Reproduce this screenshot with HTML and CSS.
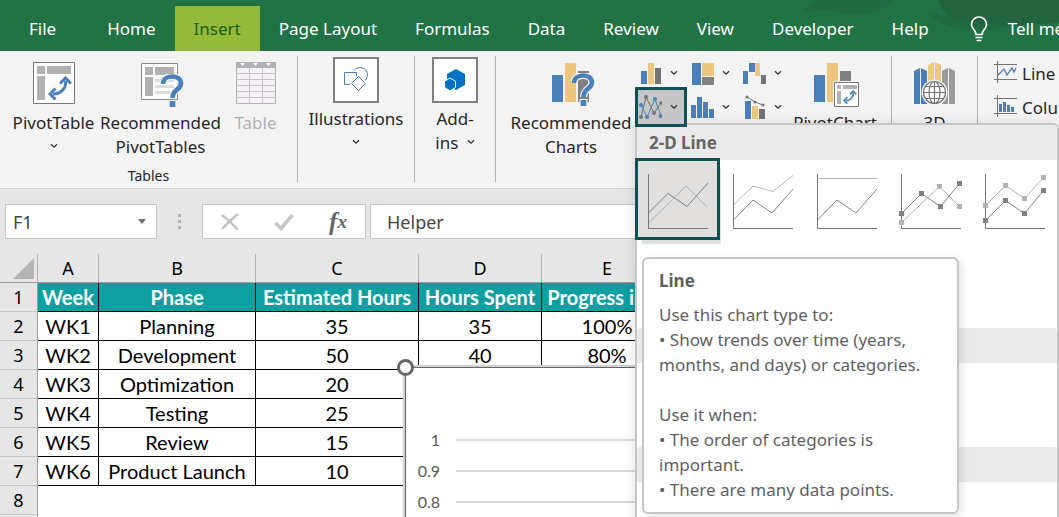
FILE: index.html
```html
<!DOCTYPE html>
<html lang="en">
<head>
  <meta charset="UTF-8">
  <meta name="viewport" content="width=device-width, initial-scale=1.0">
  <title>Worksheet - Insert Chart</title>
  <link rel="stylesheet" href="styles.css">
</head>
<body>

  <!-- Shared symbols -->
  <svg class="symbols" aria-hidden="true">
    <symbol id="chevron" viewBox="0 0 8 6">
      <path d="M1 1.2 4 4.2 7 1.2" fill="none" stroke="#333" stroke-width="1.3"/>
    </symbol>
    <symbol id="swap" viewBox="0 0 24 24">
      <path d="M17.5 5C18.5 12 13 18 5 18" fill="none" stroke="#4a80ba" stroke-width="3"/>
      <path d="M12 7.5 17.5 2 23 7.5M7.5 12.500 2 18 7.5 23.500" fill="none" stroke="#4a80ba" stroke-width="3"/>
    </symbol>
    <symbol id="question" viewBox="0 0 24 34">
      <path d="M3 10C3 0 21 0 21 9.500 21 16 12.500 15 12.500 24" fill="none" stroke="#f3f3f3" stroke-width="7"/>
      <path d="M3 10C3 0 21 0 21 9.500 21 16 12.500 15 12.500 24" fill="none" stroke="#4a80ba" stroke-width="4.600"/>
      <path d="M8.500 26h8v8h-8z" fill="#f3f3f3"/>
      <path d="M9.700 27h5.600v6H9.700z" fill="#4a80ba"/>
    </symbol>
  </svg>

  <header class="tabs">
    <svg class="tabs-art" viewBox="0 0 320 51" aria-hidden="true">
      <path d="M64 14Q68 0 85 0H155Q145 14 110 15 85 6 64 14z" fill="#216b42"/>
      <path d="M190 13Q205 30 240 29 275 28 290 22L215 18z" fill="#206a41"/>
      <path d="M199 0Q203 14 215 19 260 30 320 22V0z" fill="#236440"/>
    </svg>
    <nav class="tab-list">
      <button class="tab tab-file">File</button>
      <button class="tab">Home</button>
      <button class="tab active">Insert</button>
      <button class="tab">Page Layout</button>
      <button class="tab">Formulas</button>
      <button class="tab">Data</button>
      <button class="tab">Review</button>
      <button class="tab">View</button>
      <button class="tab">Developer</button>
      <button class="tab">Help</button>
      <button class="tab tell-me">
        <svg width="18" height="26" viewBox="0 0 18 26" fill="none" stroke="#fff" stroke-width="1.700" aria-hidden="true">
          <path d="M6 18.500C6 14 1.500 13 1.500 8.500A7.500 7.500 0 0 1 16.500 8.500C16.500 13 12 14 12 18.500zM5.500 21.500h7M6.500 24.500h5"/>
        </svg>
        Tell me
      </button>
    </nav>
  </header>

  <section class="ribbon">
    <div class="group group-tables">
      <div class="group-row">
        <button class="big">
          <svg width="42" height="42" viewBox="0 0 42 42">
            <path d="M.5.5h41v41H.5z" fill="#fff" stroke="#777"/>
            <path d="M4 4h8v8H4zM14 4h24v8H14zM4 14h8v24H4z" fill="#b1b1b1"/>
            <use href="#swap" x="15" y="14" width="24" height="24"/>
          </svg>
          <span>PivotTable</span>
          <svg class="chevron"><use href="#chevron"/></svg>
        </button>
        <button class="big">
          <svg width="42" height="42" viewBox="0 0 42 42">
            <path d="M1.500 1.500h36v36h-36z" fill="#fff" stroke="#888"/>
            <path d="M5 5h8v8H5zM15 5h19v8H15zM5 15h8v19H5z" fill="#b1b1b1"/>
            <path d="M15 17h19v3H15zM15 23h19v3H15zM15 29h19v3H15z" fill="#dcdcdc"/>
            <use href="#question" x="20" y="12" width="24" height="34"/>
          </svg>
          <span>Recommended<br>PivotTables</span>
        </button>
        <button class="big" disabled>
          <svg width="40" height="42" viewBox="0 0 40 42">
            <path d="M.5.5h39v41H.5z" fill="#f6f0f8" stroke="#b1b1b1"/>
            <path d="M0 0h40v6H0z" fill="#b1b1b1"/>
            <path d="M4 1h5L6.500 4zM17 1h5l-2.500 3zM30 1h5l-2.500 3z" fill="#fff"/>
            <path d="M13.500 6v36M26.500 6v36M0 11.500h40M0 17.500h40M0 23.500h40M0 29.500h40M0 35.500h40" stroke="#c4c4c4"/>
          </svg>
          <span>Table</span>
        </button>
      </div>
      <div class="group-name">Tables</div>
    </div>

    <div class="group group-illustrations">
      <button class="big framed">
        <svg width="46" height="46" viewBox="0 0 46 46">
          <path d="M1 1h44v44H1z" fill="#fff" stroke="#808080" stroke-width="2"/>
          <g fill="#fff" stroke="#4a80ba">
            <circle cx="27" cy="18" r="7.500"/>
            <path d="M9.500 13.500h16v16h-16z" stroke="none"/>
            <path d="M11.500 15.500h12v12h-12z"/>
            <path d="M25.500 17 35 26.500 25.500 36 16 26.500z" stroke="none"/>
            <path d="M25.500 19.500 32.500 26.500 25.500 33.500 18.500 26.500z"/>
          </g>
        </svg>
        <span>Illustrations</span>
        <svg class="chevron"><use href="#chevron"/></svg>
      </button>
    </div>

    <div class="group group-addins">
      <button class="big framed">
        <svg width="46" height="46" viewBox="0 0 46 46">
          <path d="M1 1h44v44H1z" fill="#fff" stroke="#808080" stroke-width="2"/>
          <path d="M24 12 33 17V28L24 33 15 28V17z" fill="#0071c5"/>
          <path d="M18 21 23.500 24.200V30.600L18 33.800 12.500 30.600V24.200z" fill="#0071c5" stroke="#fff"/>
        </svg>
        <span>Add-<br>ins <svg class="chevron inline"><use href="#chevron"/></svg></span>
      </button>
    </div>

    <div class="group group-charts">
      <button class="big">
        <svg width="38" height="42" viewBox="0 0 38 42">
          <path d="M0 13h11v27H0z" fill="#4a80ba"/>
          <path d="M13 1h11v39H13z" fill="#eec77f"/>
          <path d="M26 9h11v31H26z" fill="#808080"/>
          <use href="#question" x="19" y="11" width="24" height="34"/>
        </svg>
        <span>Recommended<br>Charts</span>
      </button>
      <div class="chart-types">
        <button class="small" aria-label="Column or bar chart">
          <svg width="24" height="24" viewBox="0 0 24 24">
            <path d="M3 10h6v13H3z" fill="#4a80ba"/><path d="M10 2h6v21h-6z" fill="#eec77f"/><path d="M17 7h6v16h-6z" fill="#737373"/>
          </svg>
          <svg class="chevron"><use href="#chevron"/></svg>
        </button>
        <button class="small" aria-label="Hierarchy chart">
          <svg width="24" height="24" viewBox="0 0 24 24">
            <path d="M2 2h9v22H2z" fill="#4a80ba"/><path d="M12 2h12v13H12z" fill="#eec77f"/><path d="M12 16h12v8H12z" fill="#808080"/>
          </svg>
          <svg class="chevron"><use href="#chevron"/></svg>
        </button>
        <button class="small" aria-label="Waterfall chart">
          <svg width="24" height="24" viewBox="0 0 24 24">
            <path d="M1 10h5v13H1zM7 2h6v9H7z" fill="#4a80ba"/><path d="M13 2h5v13h-5z" fill="#eec77f"/><path d="M19 14h5v9h-5z" fill="#737373"/>
          </svg>
          <svg class="chevron"><use href="#chevron"/></svg>
        </button>
        <button class="small selected" aria-label="Line chart">
          <svg width="24" height="24" viewBox="0 0 24 24">
            <path d="M3 22 8 2 16 18 23 8" fill="none" stroke="#737373"/>
            <g fill="#737373"><circle cx="3" cy="22" r="2"/><circle cx="8" cy="2" r="2"/><circle cx="16" cy="18" r="2"/><circle cx="23" cy="8" r="1.800"/></g>
            <path d="M3 10 9 22 17 4 23 21" fill="none" stroke="#4a80ba"/>
            <g fill="#4a80ba"><circle cx="3" cy="10" r="2"/><circle cx="9" cy="22" r="2"/><circle cx="17" cy="4" r="2"/><circle cx="22.500" cy="21" r="2"/></g>
          </svg>
          <svg class="chevron"><use href="#chevron"/></svg>
        </button>
        <button class="small" aria-label="Statistic chart">
          <svg width="24" height="24" viewBox="0 0 24 24">
            <path d="M1 10h5v13H1zM7 2h5v21H7zM13 7h5v16h-5zM19 14h5v9h-5z" fill="#4a80ba"/>
          </svg>
          <svg class="chevron"><use href="#chevron"/></svg>
        </button>
        <button class="small" aria-label="Combo chart">
          <svg width="24" height="24" viewBox="0 0 24 24">
            <path d="M3 6h6v18H3z" fill="#4a80ba"/><path d="M10 11h6v13h-6z" fill="#eec77f"/><path d="M17 14h6v10h-6z" fill="#737373"/>
            <path d="M5 2 13 7 21 10" fill="none" stroke="#737373"/>
            <g fill="#737373"><circle cx="5" cy="2" r="1.500"/><circle cx="13" cy="7" r="1.500"/><circle cx="21" cy="10" r="1.500"/></g>
          </svg>
          <svg class="chevron"><use href="#chevron"/></svg>
        </button>
      </div>
      <button class="big pivot-chart">
        <svg width="42" height="42" viewBox="0 0 42 42">
          <path d="M0 13h11v27H0z" fill="#4a80ba"/>
          <path d="M13 1h11v39H13z" fill="#eec77f"/>
          <path d="M26 9h11v12H26z" fill="#808080"/>
          <path d="M19 19h27v27H19z" fill="#f3f3f3"/>
          <path d="M20.500 20.500h24v24h-24z" fill="#fff" stroke="#777"/>
          <path d="M23 23h4v4h-4zM29 23h14v4H29zM23 29h4v13h-4z" fill="#b1b1b1"/>
          <use href="#swap" x="29" y="28" width="14" height="14"/>
        </svg>
        <span>PivotChart</span>
      </button>
    </div>

    <div class="group group-tours">
      <button class="big">
        <svg width="42" height="42" viewBox="0 0 42 42">
          <path d="M0 9 6 6V42H0zM7 6l6 3V42H7z" fill="#4a80ba"/>
          <path d="M14 3 20 0V30H14zM21 0l6 3V30H21z" fill="#eec77f"/>
          <path d="M28 9 34 6V42H28zM35 6l6 3V42H35z" fill="#9a9a9a"/>
          <circle cx="20.500" cy="30.500" r="13" fill="#f3f3f3"/>
          <g fill="#fff" stroke="#737373" stroke-width="1.200">
            <circle cx="20.500" cy="30.500" r="11"/>
            <ellipse cx="20.500" cy="30.500" rx="5.500" ry="11"/>
            <path d="M20.500 19.500v22M9.500 30.500h22M12 24.500h17M12 36.500h17" fill="none"/>
          </g>
        </svg>
        <span>3D<br>Map</span>
      </button>
    </div>

    <div class="group group-sparklines">
      <button class="spark">
        <svg width="24" height="24" viewBox="0 0 24 24" fill="none" stroke="#737373">
          <path d="M0 3.500h23M0 18.500h23M3.500 0v22"/>
          <path d="M4 14 10 8 13 14 18 7 20 11 22 7" stroke="#4a80ba" stroke-width="1.300"/>
        </svg>
        Line
      </button>
      <button class="spark">
        <svg width="24" height="24" viewBox="0 0 24 24" fill="none" stroke="#737373">
          <path d="M0 3.500h23M0 18.500h23M3.500 0v22"/>
          <path d="M5 9h3v8H5zM9 7h3v10H9zM13 10h3v7h-3zM17 12h3v5h-3z" fill="#4a80ba" stroke="none"/>
        </svg>
        Column
      </button>
    </div>
  </section>

  <section class="formula-bar">
    <div class="name-box">
      <input type="text" value="F1" aria-label="Name box">
      <svg width="8" height="5" viewBox="0 0 8 5"><path d="M0 0h8L4 5z" fill="#737373"/></svg>
    </div>
    <div class="grip"><i></i><i></i><i></i></div>
    <div class="formula-tools">
      <button aria-label="Cancel">
        <svg width="18" height="18" viewBox="0 0 18 18"><path d="M1 2Q9 8 17 17M17 1Q8 8 1 16" fill="none" stroke="#c0c0c0" stroke-width="2.300"/></svg>
      </button>
      <button aria-label="Enter">
        <svg width="20" height="18" viewBox="0 0 20 18"><path d="M1.500 10 7 15.500 18.500 2" fill="none" stroke="#c6c6c6" stroke-width="3.500"/></svg>
      </button>
      <button class="fx" aria-label="Insert function">f<small>x</small></button>
    </div>
    <input class="formula-input" type="text" value="Helper" aria-label="Formula">
  </section>

  <main class="sheet">
    <table class="cells">
      <colgroup>
        <col class="col-row"><col class="col-a"><col class="col-b"><col class="col-c"><col class="col-d"><col class="col-e"><col class="col-f">
      </colgroup>
      <thead>
        <tr>
          <th><svg class="corner" width="21" height="21" viewBox="0 0 21 21"><path d="M21 0V21H0z" fill="#b4b4b4"/></svg></th>
          <th>A</th><th>B</th><th>C</th><th>D</th><th>E</th><th>F</th>
        </tr>
      </thead>
      <tbody>
        <tr class="titles"><th>1</th><td>Week</td><td>Phase</td><td>Estimated Hours</td><td>Hours Spent</td><td>Progress in %</td><td>Helper</td></tr>
        <tr><th>2</th><td>WK1</td><td>Planning</td><td>35</td><td>35</td><td>100%</td><td></td></tr>
        <tr><th>3</th><td>WK2</td><td>Development</td><td>50</td><td>40</td><td>80%</td><td></td></tr>
        <tr><th>4</th><td>WK3</td><td>Optimization</td><td>20</td><td></td><td></td><td></td></tr>
        <tr><th>5</th><td>WK4</td><td>Testing</td><td>25</td><td></td><td></td><td></td></tr>
        <tr><th>6</th><td>WK5</td><td>Review</td><td>15</td><td></td><td></td><td></td></tr>
        <tr><th>7</th><td>WK6</td><td>Product Launch</td><td>10</td><td></td><td></td><td></td></tr>
        <tr class="blank"><th>8</th><td></td><td></td><td></td><td></td><td></td><td></td></tr>
        <tr class="blank"><th></th><td></td><td></td><td></td><td></td><td></td><td></td></tr>
      </tbody>
    </table>

    <!-- Chart object floating over the cells -->
    <div class="chart">
      <span class="handle"></span>
      <div class="plot">
        <div class="tick"><span>1</span></div>
        <div class="tick"><span>0.9</span></div>
        <div class="tick"><span>0.8</span></div>
      </div>
    </div>
  </main>

  <!-- Line chart drop-down -->
  <div class="menu">
    <h2 class="menu-title">2-D Line</h2>
    <div class="gallery">
      <button class="option chosen" aria-label="Line">
        <svg width="60" height="56" viewBox="0 0 60 56" fill="none">
          <path d="M.5 49 38 12 59 33" stroke="#b1b1b1"/>
          <path d="M.5 39 20 19.500 39 32.500 60 9" stroke="#808080"/>
          <path d="M.5 0v54.500H60" stroke="#777"/>
        </svg>
      </button>
      <button class="option" aria-label="Stacked line">
        <svg width="60" height="56" viewBox="0 0 60 56" fill="none">
          <path d="M.5 31 20 12 40 17.500 60 1.500" stroke="#b8b8b8"/>
          <path d="M.5 46 20 26 39 39 60 15" stroke="#808080"/>
          <path d="M.5 0v54.500H60" stroke="#777"/>
        </svg>
      </button>
      <button class="option" aria-label="100% stacked line">
        <svg width="60" height="56" viewBox="0 0 60 56" fill="none">
          <path d="M.5 4.500H60" stroke="#b1b1b1"/>
          <path d="M.5 46 20 26 39 39 60 15" stroke="#808080"/>
          <path d="M.5 0v54.500H60" stroke="#777"/>
        </svg>
      </button>
      <button class="option" aria-label="Line with markers">
        <svg width="60" height="56" viewBox="0 0 60 56" fill="none">
          <path d="M.5 0v54.500H60" stroke="#777"/>
          <path d="M.5 48.500 38.500 12.500 58.500 32.500" stroke="#b1b1b1"/>
          <path d="M-2 46h5v5h-5zM36 10h5v5h-5zM56 30h5v5h-5z" fill="#b1b1b1"/>
          <path d="M.5 39.500 20.500 19.500 39.500 32.500 58.500 9.500" stroke="#808080"/>
          <path d="M-2 37h5v5h-5zM18 17h5v5h-5zM37 30h5v5h-5zM56 7h5v5h-5z" fill="#808080"/>
        </svg>
      </button>
      <button class="option" aria-label="Stacked line with markers">
        <svg width="60" height="56" viewBox="0 0 60 56" fill="none">
          <path d="M.5 0v54.500H60" stroke="#777"/>
          <path d="M.5 31.500 20.500 11.500 39.500 24.500 58.500 3.500" stroke="#b1b1b1"/>
          <path d="M-2 29h5v5h-5zM18 9h5v5h-5zM37 22h5v5h-5zM56 1h5v5h-5z" fill="#b1b1b1"/>
          <path d="M.5 46.500 20.500 26.500 39.500 39.500 58.500 16.500" stroke="#808080"/>
          <path d="M-2 44h5v5h-5zM18 24h5v5h-5zM37 37h5v5h-5zM56 14h5v5h-5z" fill="#808080"/>
        </svg>
      </button>
    </div>
    <div class="menu-title"></div>
    <div class="gallery short"></div>
    <div class="menu-title"></div>

    <div class="tooltip" role="tooltip">
      <h3>Line</h3>
      <p>Use this chart type to:<br>• Show trends over time (years,<br>months, and days) or categories.</p>
      <p>Use it when:<br>• The order of categories is<br>important.<br>• There are many data points.</p>
    </div>
  </div>

</body>
</html>
```
FILE: styles.css
```css
* {
  box-sizing: border-box;
}
body {
  margin: 0;
  height: 100vh;
  display: flex;
  flex-direction: column;
  position: relative;
  overflow: hidden;
  font-family: "Noto Sans", "Open Sans", sans-serif;
  font-size: 17px;
  color: #262626;
  background: #e6e6e6;
}
button,
input {
  font: inherit;
  color: inherit;
  border: 0;
  padding: 0;
  margin: 0;
  background: none;
}
.symbols {
  position: absolute;
  width: 0;
  height: 0;
}
.chevron {
  width: 8px;
  height: 6px;
  flex: none;
}

/* Tabs */
.tabs {
  flex: none;
  position: relative;
  background: #217346;
  overflow: hidden;
}
.tabs-art {
  position: absolute;
  top: 0;
  right: 0;
  width: 320px;
  height: 51px;
}
.tab-list {
  position: relative;
  display: flex;
  padding: 6px 0 0 10px;
}
.tab {
  flex: none;
  height: 45px;
  padding: 0 19px;
  color: #fff;
  white-space: nowrap;
}
.tab-file {
  margin-right: 13px;
}
.tab.active {
  background: #95b93a;
  color: #155f14;
}
.tell-me {
  display: flex;
  align-items: center;
  gap: 20px;
  padding-left: 22px;
}

/* Ribbon */
.ribbon {
  flex: none;
  display: flex;
  height: 138px;
  padding-top: 5px;
  background: #f3f3f3;
  border-bottom: 1px solid #d2d2d2;
  overflow: hidden;
}
.group {
  flex: none;
  height: 126px;
  border-right: 1px solid #b1b1b1;
}
.group-row {
  display: flex;
}
.group-tables {
  width: 298px;
}
.group-illustrations {
  width: 117px;
}
.group-addins {
  width: 81px;
}
.group-charts {
  display: flex;
  width: 396px;
  padding-left: 11px;
}
.group-tours {
  width: 86px;
}
.group-sparklines {
  padding-left: 16px;
  border: 0;
}
.group-name {
  margin-top: 5px;
  text-align: center;
  font-size: 14px;
  line-height: 20px;
}
.big {
  display: flex;
  flex-direction: column;
  align-items: center;
  width: 100%;
  height: 105px;
  padding-top: 6px;
  line-height: 24px;
  white-space: nowrap;
}
.big > svg:first-child {
  flex: none;
  margin-bottom: 7px;
  overflow: visible;
}
.big .chevron {
  margin-top: 8px;
}
.big .chevron.inline {
  margin: 0 0 4px 4px;
}
.big:disabled {
  color: #b1b1b1;
}
.big.framed {
  padding-top: 1px;
}
.framed > svg:first-child {
  margin-bottom: 4px;
}
.group-tables .big {
  width: 107px;
}
.group-tables .big:disabled {
  width: 83px;
}
.group-charts .big {
  width: 128px;
}
.group-charts .pivot-chart {
  width: 88px;
  margin-left: 3px;
}
.chart-types {
  display: grid;
  grid-template-columns: repeat(3, 46px);
  grid-auto-rows: 34px;
  gap: 0 6px;
  margin-left: 3px;
}
.small {
  display: flex;
  align-items: center;
  gap: 8px;
}
.small.selected {
  position: relative;
  z-index: 3;
  background: #c6c6c6;
  outline: 3px solid #0f4f55;
}
.spark {
  display: flex;
  align-items: center;
  gap: 4px;
  height: 34px;
}

/* Formula bar */
.formula-bar {
  flex: none;
  display: flex;
  height: 65px;
  padding: 15px 0 15px 5px;
  font-size: 18px;
  color: #444;
}
.name-box {
  display: flex;
  align-items: center;
  width: 152px;
  padding: 0 10px 0 7px;
  background: #fff;
  border: 1px solid #c6c6c6;
}
.name-box input {
  flex: 1;
  min-width: 0;
}
.grip {
  display: flex;
  flex-direction: column;
  align-items: center;
  justify-content: center;
  gap: 3px;
  width: 45px;
}
.grip i {
  width: 3px;
  height: 3px;
  background: #b1b1b1;
}
.formula-tools {
  display: flex;
  width: 164px;
  background: #fff;
  border: 1px solid #c6c6c6;
}
.formula-tools button {
  flex: 1;
  display: flex;
  align-items: center;
  justify-content: center;
}
.formula-tools .fx {
  font: italic bold 25px "Liberation Serif", serif;
  color: #666;
}
.fx small {
  font-size: 19px;
}
.formula-input {
  flex: 1;
  margin-left: 4px;
  padding-left: 16px;
  background: #fff;
  border: 1px solid #c6c6c6;
}

/* Sheet */
.sheet {
  flex: 1;
  position: relative;
  overflow: hidden;
  background: #fff;
}
.cells {
  width: 100%;
  table-layout: fixed;
  border-collapse: separate;
  border-spacing: 0;
  font-family: Lato, "Noto Sans", sans-serif;
  font-size: 20px;
  color: #000;
}
.col-row { width: 38px; }
.col-a { width: 61px; }
.col-b { width: 157px; }
.col-c { width: 163px; }
.col-d { width: 123px; }
.col-e { width: 131px; }
.cells th,
.cells td {
  height: 29px;
  padding: 0;
  line-height: 28px;
  text-align: center;
  white-space: nowrap;
}
.cells th {
  font-family: "Noto Sans", sans-serif;
  font-size: 18px;
  font-weight: normal;
  background: #e6e6e6;
  border-right: 1px solid #b1b1b1;
  border-bottom: 1px solid #c6c6c6;
}
.cells thead th {
  border-bottom-color: #9b9b9b;
}
.cells tbody th {
  border-right-color: #9b9b9b;
}
.cells td {
  border-right: 1px solid #000;
  border-bottom: 1px solid #000;
}
.cells .titles td {
  background: #0e9fa0;
  color: #fff;
  font-weight: bold;
}
.cells .blank td {
  border-color: transparent;
}
.corner {
  display: block;
  margin-left: 13px;
}

/* Chart object */
.chart {
  position: absolute;
  top: 111px;
  left: 403px;
  right: 0;
  bottom: 0;
  background: #fff;
  border: 2px solid #d0d0d0;
  border-width: 2px 0 0 2px;
}
.handle {
  position: absolute;
  top: -8px;
  left: -8px;
  width: 17px;
  height: 17px;
  background: #fff;
  border: 3px solid #666;
  border-radius: 50%;
}
.plot {
  height: 100%;
  padding-top: 56px;
  border: 1px solid #666;
  border-width: 1px 0 0 1px;
}
.tick {
  display: flex;
  align-items: center;
  gap: 16px;
  height: 31px;
  font-family: Lato, sans-serif;
  font-size: 16px;
  color: #595959;
}
.tick span {
  width: 34px;
  text-align: right;
}
.tick::after {
  content: "";
  flex: 1;
  height: 2px;
  background: #d9d9d9;
}

/* Chart menu */
.menu {
  position: absolute;
  z-index: 2;
  top: 123px;
  right: 0;
  bottom: -10px;
  width: 424px;
  background: #fff;
  border: 2px solid #c6c6c6;
  border-radius: 6px;
  box-shadow: -2px 0 12px rgba(0, 0, 0, 0.1);
}
.menu-title {
  height: 35px;
  margin: 0;
  padding-left: 12px;
  font-size: 17px;
  line-height: 35px;
  color: #666;
  background: #eaeaea;
  border-radius: 4px 4px 0 0;
}
.gallery {
  display: flex;
  height: 168px;
}
.gallery.short {
  height: 84px;
}
.option {
  display: flex;
  justify-content: center;
  width: 84px;
  height: 84px;
  padding-top: 14px;
}
.option svg {
  overflow: visible;
}
.option.chosen {
  width: 79px;
  height: 76px;
  margin: 1px 4px 0 1px;
  padding: 13px 0 0 1px;
  background: #e1dfdd;
  outline: 3px solid #0f4f55;
  box-shadow: 4px 7px 0 #e1dfdd;
}

/* Tooltip */
.tooltip {
  position: absolute;
  top: 132px;
  left: 5px;
  width: 317px;
  padding: 9px 15px 10px;
  background: #fff;
  border: 2px solid #c6c6c6;
  border-radius: 6px;
  box-shadow: 3px 3px 8px rgba(0, 0, 0, 0.1);
  color: #5f5f5f;
  line-height: 25px;
  white-space: nowrap;
}
.tooltip h3 {
  margin: 0 0 9px;
  font-size: 17px;
}
.tooltip p {
  margin: 0 0 25px;
}
.tooltip p:last-child {
  margin: 0;
}
```
